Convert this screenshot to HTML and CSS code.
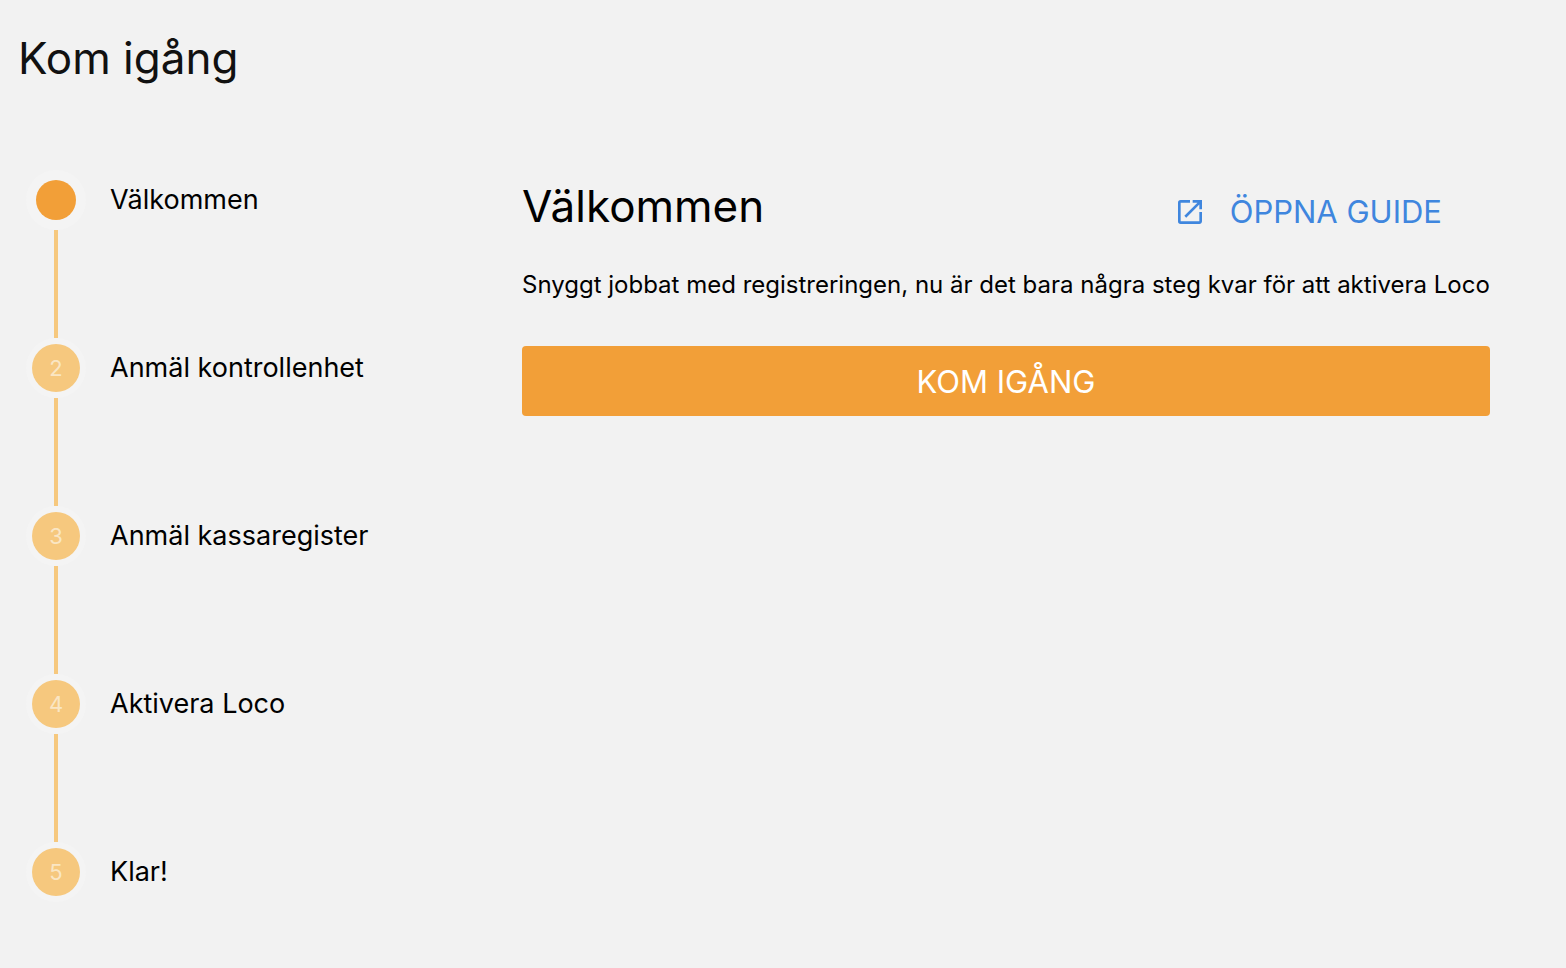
FILE: index.html
```html
<!DOCTYPE html>
<html lang="sv">
<head>
  <meta charset="UTF-8" />
  <meta name="viewport" content="width=device-width, initial-scale=1.0" />
  <title>Kom igång</title>
  <link rel="stylesheet" href="styles.css">
</head>
<body>
  <h1>Kom igång</h1>

  <div class="wizard">
    <ol class="stepper">
      <li class="step active">
        <span class="step-icon"></span>
        <span class="step-label">Välkommen</span>
      </li>
      <li class="step">
        <span class="step-icon">2</span>
        <span class="step-label">Anmäl kontrollenhet</span>
      </li>
      <li class="step">
        <span class="step-icon">3</span>
        <span class="step-label">Anmäl kassaregister</span>
      </li>
      <li class="step">
        <span class="step-icon">4</span>
        <span class="step-label">Aktivera Loco</span>
      </li>
      <li class="step">
        <span class="step-icon">5</span>
        <span class="step-label">Klar!</span>
      </li>
    </ol>

    <main class="content">
      <div class="content-header">
        <h2>Välkommen</h2>
        <a class="guide-link" href="#guide">
          <svg class="guide-icon" viewBox="0 0 24 24" aria-hidden="true">
            <path d="M19 19H5V5h7V3H5a2 2 0 0 0-2 2v14a2 2 0 0 0 2 2h14c1.100 0 2-.9 2-2v-7h-2v7zM14 3v2h3.590l-9.830 9.830 1.410 1.410L19 6.410V10h2V3h-7z" fill="currentColor" />
          </svg>
          ÖPPNA GUIDE
        </a>
      </div>
      <p>Snyggt jobbat med registreringen, nu är det bara några steg kvar för att aktivera Loco</p>
      <button type="button" class="start-button">KOM IGÅNG</button>
    </main>
  </div>
</body>
</html>
```
FILE: styles.css
```css
* {
  box-sizing: border-box;
}
body {
  margin: 0;
  padding: 28px 76px 28px 18px;
  background-color: #f2f2f2;
  color: #000;
  font-family: Inter, sans-serif;
}
h1, h2 {
  margin: 0;
  font-size: 44px;
  line-height: 60px;
  font-weight: 400;
}
h1 {
  color: #111;
}
.wizard {
  display: flex;
  margin-top: 88px;
}
.stepper {
  flex: 0 0 504px;
  margin: 0;
  padding: 0 0 0 14px;
  list-style: none;
}
.step {
  display: grid;
  grid-template-columns: 48px 1fr;
  column-gap: 30px;
  align-items: center;
}
.step:not(:last-child)::after {
  content: "";
  width: 4px;
  height: 108px;
  margin: 6px 0;
  justify-self: center;
  background-color: #f6c87e;
}
.step-icon {
  display: flex;
  align-items: center;
  justify-content: center;
  width: 48px;
  height: 48px;
  border-radius: 50%;
  background-color: #f6c87e;
  color: #fae6c4;
  font-size: 22px;
  box-shadow: 0 0 0 6px #f4f4f4;
}
.active .step-icon {
  width: 40px;
  height: 40px;
  margin: 4px;
  background-color: #f29f38;
  box-shadow: 0 0 0 10px #f4f4f4;
}
.step-label {
  font-size: 27px;
  line-height: 36px;
}
.content {
  flex: 1;
  min-width: 0;
}
.content-header {
  display: flex;
  align-items: center;
  justify-content: space-between;
  padding-right: 48px;
}
.guide-link {
  display: flex;
  align-items: center;
  gap: 24px;
  margin-top: 12px;
  color: #3f86de;
  font-size: 31px;
  line-height: 40px;
  text-decoration: none;
}
.guide-icon {
  width: 32px;
  height: 32px;
}
p {
  margin: 32px 0 44px;
  font-size: 24px;
  line-height: 34px;
}
.start-button {
  display: block;
  width: 100%;
  height: 70px;
  border: none;
  border-radius: 4px;
  background-color: #f29f38;
  color: #fff;
  font-family: inherit;
  font-size: 31px;
  cursor: pointer;
}
```
